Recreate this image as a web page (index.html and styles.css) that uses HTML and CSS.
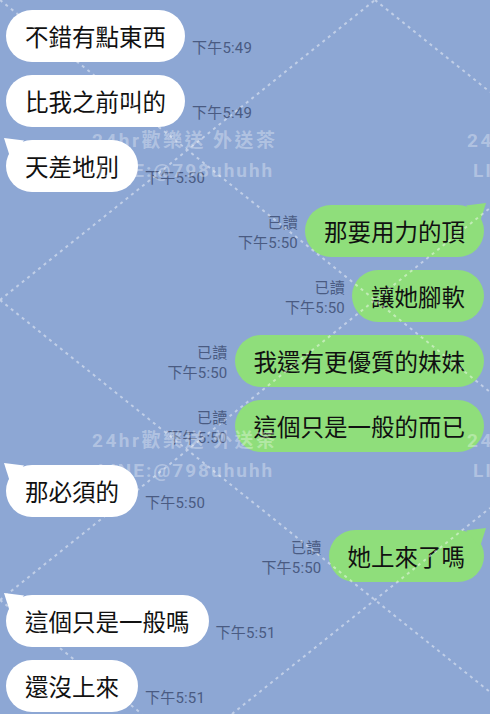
FILE: index.html
```html
<!DOCTYPE html>
<html lang="zh-Hant">
<head>
    <meta charset="UTF-8">
    <title>LINE Chat</title>
    <link rel="stylesheet" href="styles.css">
</head>
<body>
    <div class="chat">
        <div class="row in">
            <div class="bubble">不錯有點東西</div>
            <div class="meta">下午5:49</div>
        </div>
        <div class="row in">
            <div class="bubble">比我之前叫的</div>
            <div class="meta">下午5:49</div>
        </div>
        <div class="row in">
            <div class="bubble tail">天差地別</div>
            <div class="meta">下午5:50</div>
        </div>
        <div class="row out">
            <div class="meta">已讀<br>下午5:50</div>
            <div class="bubble tail">那要用力的頂</div>
        </div>
        <div class="row out">
            <div class="meta">已讀<br>下午5:50</div>
            <div class="bubble">讓她腳軟</div>
        </div>
        <div class="row out">
            <div class="meta">已讀<br>下午5:50</div>
            <div class="bubble">我還有更優質的妹妹</div>
        </div>
        <div class="row out">
            <div class="meta">已讀<br>下午5:50</div>
            <div class="bubble">這個只是一般的而已</div>
        </div>
        <div class="row in">
            <div class="bubble tail">那必須的</div>
            <div class="meta">下午5:50</div>
        </div>
        <div class="row out">
            <div class="meta">已讀<br>下午5:50</div>
            <div class="bubble tail">她上來了嗎</div>
        </div>
        <div class="row in">
            <div class="bubble tail">這個只是一般嗎</div>
            <div class="meta">下午5:51</div>
        </div>
        <div class="row in">
            <div class="bubble">還沒上來</div>
            <div class="meta">下午5:51</div>
        </div>

        <!-- watermark overlay -->
        <svg class="lines" width="490" height="714" viewBox="0 0 490 714">
            <g stroke="#fff" stroke-width="2" stroke-dasharray="3 4" fill="none">
                <line x1="375" y1="0" x2="490" y2="92"/>
                <line x1="0" y1="0" x2="490" y2="392"/>
                <line x1="0" y1="300" x2="490" y2="692"/>
                <line x1="0" y1="600" x2="142" y2="714"/>
                <line x1="0" y1="300" x2="375" y2="0"/>
                <line x1="0" y1="600" x2="490" y2="208"/>
                <line x1="232" y1="714" x2="490" y2="508"/>
            </g>
        </svg>
        <div class="mark m1"><span class="mark-top">24hr歡樂送 外送茶</span><span class="mark-bottom">LINE:@798uhuhh</span></div>
        <div class="mark m2"><span class="mark-top">24hr歡樂送 外送茶</span><span class="mark-bottom">LINE:@798uhuhh</span></div>
        <div class="mark m3"><span class="mark-top">24</span><span class="mark-bottom">LI</span></div>
        <div class="mark m4"><span class="mark-top">24</span><span class="mark-bottom">LI</span></div>
    </div>
</body>
</html>
```

FILE: styles.css
```css
body {
    margin: 0;
    background: #8da7d4;
    font-family: "Noto Sans CJK TC", "Noto Sans", sans-serif;
    overflow: hidden;
}
.chat {
    position: relative;
    height: 714px;
    padding: 10px 6px 0;
    box-sizing: border-box;
    display: flex;
    flex-direction: column;
    gap: 13px;
    overflow: hidden;
}
.row {
    display: flex;
    align-items: flex-end;
}
.row.out {
    justify-content: flex-end;
}
.bubble {
    position: relative;
    height: 52px;
    line-height: 52px;
    padding: 0 19px;
    border-radius: 26px;
    background: #fff;
    color: #111;
    font-size: 23.5px;
    white-space: nowrap;
}
.out .bubble {
    background: #8fde7b;
}
.bubble.tail::before {
    content: "";
    position: absolute;
    top: -2px;
    width: 20px;
    height: 20px;
    background: inherit;
}
.in .bubble.tail::before {
    left: -2px;
    clip-path: polygon(0 0, 100% 12%, 30% 95%);
}
.out .bubble.tail::before {
    right: -2px;
    clip-path: polygon(100% 0, 0 12%, 70% 95%);
}
.meta {
    font-family: Roboto, "Noto Sans CJK TC", sans-serif;
    font-size: 15px;
    letter-spacing: 0.2px;
    line-height: 20px;
    color: #4a5b82;
    margin: 0 7px 4px;
    white-space: nowrap;
}
.out .meta {
    text-align: right;
}
.lines {
    position: absolute;
    left: 0;
    top: 0;
    opacity: 0.45;
    pointer-events: none;
}
.mark {
    position: absolute;
    display: flex;
    flex-direction: column;
    color: rgba(255, 255, 255, 0.33);
    font-family: Roboto, "Noto Sans CJK TC", sans-serif;
    font-weight: bold;
    font-size: 19px;
    line-height: 30px;
    white-space: nowrap;
    pointer-events: none;
}
.mark-top {
    letter-spacing: 2.5px;
}
.mark-bottom {
    letter-spacing: 2px;
    padding-left: 6px;
}
.m1 { left: 92px; top: 126px; }
.m2 { left: 92px; top: 426px; }
.m3 { left: 467px; top: 126px; }
.m4 { left: 467px; top: 426px; }
```
